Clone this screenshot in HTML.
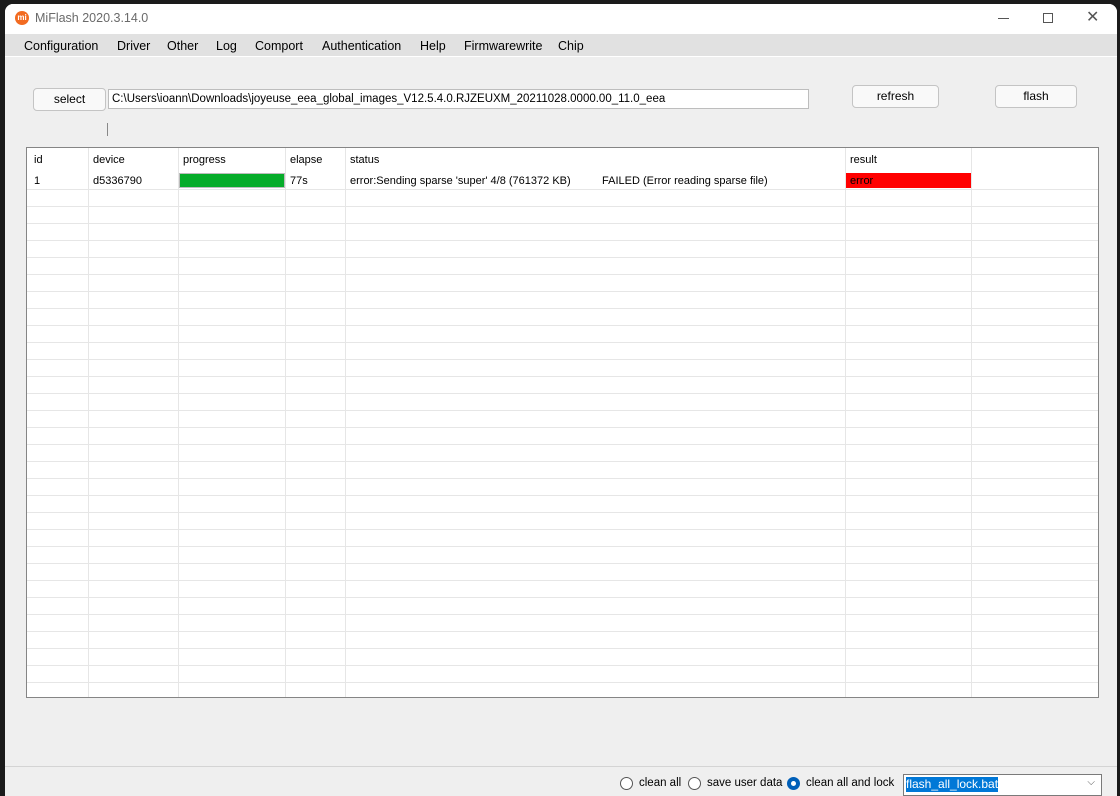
<!DOCTYPE html>
<html><head><meta charset="utf-8"><style>
*{margin:0;padding:0;box-sizing:border-box}
body{width:1120px;height:796px;background:#1b1b1b;position:relative;overflow:hidden;font-family:"Liberation Sans",sans-serif;font-size:12px;color:#000}
.win{position:absolute;left:5px;top:4px;width:1112px;height:792px;background:#efefef;border-radius:8px 8px 0 0;overflow:hidden}
.title{position:absolute;left:0;top:0;width:100%;height:30px;background:#fff}
.title .t{position:absolute;left:30px;top:7px;font-size:12.5px;color:#6a6a6a}
.logo{position:absolute;left:10px;top:7px;width:14px;height:14px;border-radius:50%;background:#f26b21;color:#fff;font-size:8px;text-align:center;line-height:14px;font-weight:bold}
.menu{position:absolute;left:0;top:30px;width:100%;height:23px;background:#e1e1e1;border-bottom:1px solid #fff}
.menu span{position:absolute;top:5px;font-size:12.5px}
.btn{position:absolute;height:23px;background:#f9f9f9;border:1px solid #c4c4c4;border-radius:4px;text-align:center;line-height:21px;font-size:12px}
.path{position:absolute;left:103px;top:85px;width:701px;height:20px;background:#fff;border:1px solid #bdbdbd;padding-left:3px;line-height:18px;font-size:11.5px}
.tbl{position:absolute;left:21px;top:143px;width:1073px;height:551px;background:#fff;border:1px solid #858585}
.vl{position:absolute;top:0;bottom:0;width:1px;background:#e6e6e6}
.hl{position:absolute;left:0;right:0;height:1px;background:#e6e6e6}
.c{position:absolute;font-size:11px}
.rad{position:absolute;top:773px;width:13px;height:13px;border-radius:50%;border:1px solid #555;background:#fff}
</style></head><body>
<div class="win">
<div class="title"><div class="logo">mi</div><div class="t">MiFlash 2020.3.14.0</div>
<div style="position:absolute;left:993px;top:14px;width:11px;height:1px;background:#555"></div>
<div style="position:absolute;left:1038px;top:9px;width:10px;height:10px;border:1px solid #555"></div>
<div style="position:absolute;left:1081px;top:3px;font-size:16px;color:#555">✕</div>
</div>
<div class="menu">
<span style="left:19px">Configuration</span><span style="left:112px">Driver</span><span style="left:162px">Other</span><span style="left:211px">Log</span><span style="left:250px">Comport</span><span style="left:317px">Authentication</span><span style="left:415px">Help</span><span style="left:459px">Firmwarewrite</span><span style="left:553px">Chip</span>
</div>
<div class="btn" style="left:28px;top:84px;width:73px">select</div>
<div class="path">C:\Users\ioann\Downloads\joyeuse_eea_global_images_V12.5.4.0.RJZEUXM_20211028.0000.00_11.0_eea</div>
<div class="btn" style="left:847px;top:81px;width:87px">refresh</div>
<div class="btn" style="left:990px;top:81px;width:82px">flash</div>
<div style="position:absolute;left:102px;top:119px;width:1px;height:13px;background:#888"></div>
<div class="tbl">
<div class="vl" style="left:61px"></div><div class="vl" style="left:151px"></div><div class="vl" style="left:258px"></div><div class="vl" style="left:318px"></div><div class="vl" style="left:818px"></div><div class="vl" style="left:944px"></div>
<div style="position:absolute;left:0;right:0;top:-1px;bottom:0">
<div class="hl" style="top:42px"></div><div class="hl" style="top:59px"></div><div class="hl" style="top:76px"></div><div class="hl" style="top:93px"></div><div class="hl" style="top:110px"></div><div class="hl" style="top:127px"></div><div class="hl" style="top:144px"></div><div class="hl" style="top:161px"></div><div class="hl" style="top:178px"></div><div class="hl" style="top:195px"></div><div class="hl" style="top:212px"></div><div class="hl" style="top:229px"></div><div class="hl" style="top:246px"></div><div class="hl" style="top:263px"></div><div class="hl" style="top:280px"></div><div class="hl" style="top:297px"></div><div class="hl" style="top:314px"></div><div class="hl" style="top:331px"></div><div class="hl" style="top:348px"></div><div class="hl" style="top:365px"></div><div class="hl" style="top:382px"></div><div class="hl" style="top:399px"></div><div class="hl" style="top:416px"></div><div class="hl" style="top:433px"></div><div class="hl" style="top:450px"></div><div class="hl" style="top:467px"></div><div class="hl" style="top:484px"></div><div class="hl" style="top:501px"></div><div class="hl" style="top:518px"></div><div class="hl" style="top:535px"></div>
</div>
<div style="position:absolute;left:152px;top:25px;width:106px;height:15px;background:#06ac2a;border:1px solid #bcbcbc"></div>
<div style="position:absolute;left:819px;top:25px;width:125px;height:15px;background:#ff0000"></div>
<span class="c" style="left:7px;top:6px">id</span><span class="c" style="left:66px;top:6px">device</span><span class="c" style="left:156px;top:6px">progress</span><span class="c" style="left:263px;top:6px">elapse</span><span class="c" style="left:323px;top:6px">status</span><span class="c" style="left:823px;top:6px">result</span>
<span class="c" style="left:7px;top:27px">1</span><span class="c" style="left:66px;top:27px">d5336790</span><span class="c" style="left:263px;top:27px">77s</span><span class="c" style="left:323px;top:27px">error:Sending sparse 'super' 4/8 (761372 KB)</span><span class="c" style="left:575px;top:27px">FAILED (Error reading sparse file)</span><span class="c" style="left:823px;top:27px">error</span>
</div>
<div style="position:absolute;left:0;top:762px;width:100%;height:1px;background:#d4d4d4"></div>
<div class="rad" style="left:615px"></div><span class="c" style="left:634px;top:773px;font-size:11.5px">clean all</span>
<div class="rad" style="left:683px"></div><span class="c" style="left:702px;top:773px;font-size:11.5px">save user data</span>
<div class="rad" style="left:782px;border-color:#005fb8;background:#005fb8"><div style="position:absolute;left:3px;top:3px;width:5px;height:5px;border-radius:50%;background:#fff"></div></div><span class="c" style="left:801px;top:773px;font-size:11.5px">clean all and lock</span>
<div style="position:absolute;left:898px;top:770px;width:199px;height:22px;background:#fff;border:1px solid #7a7a7a"><span style="position:absolute;left:2px;top:2px;background:#0078d7;color:#fff;font-size:12px;line-height:15px">flash_all_lock.bat</span><span style="position:absolute;right:6px;top:2px;font-size:10px;color:#555">⌵</span></div>
</div>
<div style="position:absolute;left:0;top:0;width:5px;height:796px;background:#1b1b1b"></div>
</body></html>
